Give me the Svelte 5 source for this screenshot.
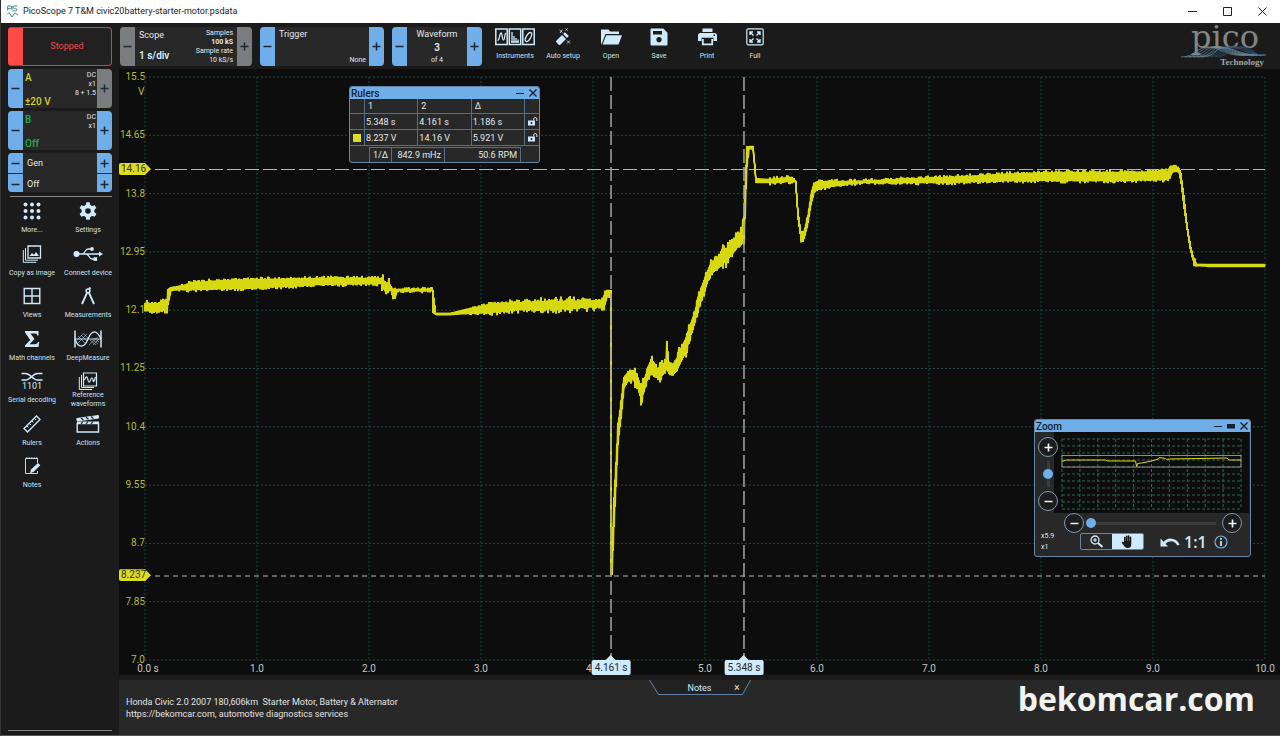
<script lang="ts">
  type Key = [x: number, top: number, bottom: number, noise: number];

  const PLOT_W = 1120;
  const PLOT_H = 583;

  const volts = ["15.5", "14.65", "13.8", "12.95", "12.1", "11.25", "10.4", "9.55", "8.7", "7.85", "7.0"];
  const seconds = ["0.0 s", "1.0", "2.0", "3.0", "4.0", "5.0", "6.0", "7.0", "8.0", "9.0", "10.0"];

  const timeRulers = [4.161, 5.348];
  const voltRulers = [14.16, 8.237];

  const xPct = (s: number) => (s / 10) * 100;
  const yPct = (v: number) => ((15.5 - v) / 8.5) * 100;

  /* Min/max envelope of channel A, in plot units. */
  const envelope: Key[] = [
    [0, 226, 234, 2], [22, 226, 234, 2], [23, 212, 228, 0], [26, 210, 214, 0], [34, 209, 213, 1],
    [50, 205, 213, 1], [80, 203, 212, 1], [120, 202, 211, 1], [170, 201, 208, 1], [236, 201, 207, 0],
    [237, 202, 211, 3], [246, 209, 214, 1], [248, 212, 222, 1], [250, 212, 222, 1], [252, 212, 214, 1],
    [287, 212, 214, 1], [288, 213, 236, 0], [291, 236, 238, 0], [305, 236, 238, 0], [325, 231, 237, 1],
    [345, 227, 236, 2], [375, 225, 233, 2], [415, 224, 232, 2], [458, 223, 230, 2], [460, 214, 228, 1],
    [462, 213, 219, 1], [465, 213, 221, 0], [466, 213, 498, 0], [467, 480, 498, 0], [469, 420, 450, 0],
    [471, 385, 410, 0], [473, 348, 366, 1], [476, 325, 342, 1], [479, 300, 311, 1], [484, 294, 303, 2],
    [488, 293, 303, 3], [492, 297, 309, 2], [495, 307, 319, 2], [496, 311, 327, 2], [499, 303, 313, 3],
    [503, 292, 301, 2], [507, 279, 296, 2], [509, 289, 300, 2], [513, 291, 301, 3], [518, 288, 297, 2],
    [521, 283, 293, 2], [522, 264, 291, 1], [524, 285, 297, 2], [528, 287, 298, 2], [532, 281, 293, 3],
    [536, 271, 285, 3], [540, 263, 277, 3], [545, 249, 261, 2], [550, 234, 244, 2], [555, 215, 227, 2],
    [560, 200, 213, 2], [565, 188, 198, 2], [575, 177, 190, 3], [585, 168, 180, 3], [592, 159, 171, 3],
    [597, 154, 167, 3], [599, 140, 166, 2], [600, 108, 142, 0], [601, 88, 112, 0], [602, 69, 90, 0],
    [604, 69, 72, 0], [608, 69, 73, 0], [610, 88, 96, 0], [611, 101, 106, 0], [625, 102, 106, 1],
    [644, 100, 105, 1], [650, 103, 105, 0], [651, 104, 115, 0], [653, 132, 143, 0], [656, 155, 164, 1],
    [659, 155, 162, 1], [663, 138, 146, 0], [666, 118, 128, 1], [669, 106, 116, 1], [673, 104, 112, 1],
    [685, 104, 110, 1], [715, 104, 106, 1], [755, 102, 106, 1], [805, 100, 106, 1], [855, 97, 104, 1],
    [905, 95, 104, 1], [965, 95, 104, 1], [1023, 94, 103, 1], [1025, 90, 100, 1], [1029, 88, 93, 1],
    [1034, 91, 96, 1], [1036, 96, 107, 0], [1039, 118, 132, 0], [1042, 145, 153, 0], [1045, 166, 172, 1],
    [1049, 182, 187, 1], [1052, 187, 189, 0], [1065, 187, 190, 0], [1120, 187, 190, 0],
  ];

  function tracePath(keys: Key[]) {
    let seed = 11;
    const rand = () => {
      seed = (seed * 16807) % 2147483647;
      return seed / 2147483647;
    };
    const spike = (n: number) => rand() ** 3 * n * 2.4;
    const points: string[] = [];
    for (let i = 1; i < keys.length; i++) {
      const [x0, t0, b0, n0] = keys[i - 1];
      const [x1, t1, b1] = keys[i];
      for (let x = x0; x < x1; x++) {
        const k = (x - x0) / (x1 - x0);
        const top = t0 + (t1 - t0) * k - spike(n0);
        const bottom = b0 + (b1 - b0) * k + spike(n0);
        points.push(`${x},${top.toFixed(1)} ${x},${bottom.toFixed(1)}`);
      }
    }
    const [x, t] = keys[keys.length - 1];
    points.push(`${x},${t}`);
    return points.join(" ");
  }

  const trace = tracePath(envelope);

  const toolbar = [
    ["instruments", "Instruments"],
    ["wand", "Auto setup"],
    ["folder", "Open"],
    ["save", "Save"],
    ["print", "Print"],
    ["full", "Full"],
  ];

  const tools = [
    ["more", "More..."],
    ["gear", "Settings"],
    ["image", "Copy as image"],
    ["usb", "Connect device"],
    ["views", "Views"],
    ["compass", "Measurements"],
    ["sigma", "Math channels"],
    ["deep", "DeepMeasure"],
    ["serial", "Serial decoding"],
    ["reference", "Reference waveforms"],
    ["ruler", "Rulers"],
    ["actions", "Actions"],
    ["notes", "Notes"],
  ];

  let zoomX = $state(0);
  let zoomY = $state(50);
  let notes = $state(
    "Honda Civic 2.0 2007 180,606km  Starter Motor, Battery & Alternator\nhttps://bekomcar.com, automotive diagnostics services",
  );
</script>

{#snippet minus(label: string, grey = false)}
  <button class="step" class:step--grey={grey} aria-label={`${label} down`}>
    <svg width="9" height="9" viewBox="0 0 9 9"><path d="M0.500 4.500h8" /></svg>
  </button>
{/snippet}

{#snippet plus(label: string, grey = false)}
  <button class="step" class:step--grey={grey} aria-label={`${label} up`}>
    <svg width="9" height="9" viewBox="0 0 9 9"><path d="M0.500 4.500h8M4.500 0.500v8" /></svg>
  </button>
{/snippet}

{#snippet lock()}
  <svg class="lock" width="10" height="9" viewBox="0 0 10 9">
    <path d="M0 3.500h7v5H0z" fill="#cfeafc" />
    <path d="M5.700 3.500V2.200a1.600 1.600 0 0 1 3.200 0V4" fill="none" stroke="#cfeafc" />
    <path d="M3.500 5v2" stroke="#1c1c1c" stroke-width="1.400" />
  </svg>
{/snippet}

{#snippet icon(name: string)}
  {#if name === "instruments"}
    <svg width="40" height="18" viewBox="0 0 40 18" class="line">
      <path d="M.8 1h11.400v15.500H.8zM14.300 1h11.400v15.500H14.300zM27.800 1h11.400v15.500H27.800z" stroke-width="1.500" />
      <path d="M2.500 12c2 1 2-7 3.500-7s1 7 2.500 7 1-6 2.200-7" stroke-width="1.300" />
      <path d="M17 4v10M19 8v6M21 10v4M23 11.500V14M16 14h8" stroke-width="1.300" />
      <ellipse cx="33.500" cy="9" rx="2.200" ry="5" transform="rotate(30 33.500 9)" stroke-width="1.300" />
    </svg>
  {:else if name === "wand"}
    <svg width="18" height="18" viewBox="0 0 18 18" class="solid">
      <path d="m2.500 12.500 5.500-5.500 4 4-5.500 5.500a1.400 1.400 0 0 1-2 0l-2-2a1.400 1.400 0 0 1 0-2z" />
      <path d="M9 6 11 4.200 14.800 8 13 10z" />
      <path d="m5.500 2 3 2.500M8.500 1.500 6 5M13.500.5l-2 2M11.500.5l2 2M13 12.500l3 3M16 12.500 13 15.500" fill="none" stroke="#cfeafc" stroke-width=".8" />
    </svg>
  {:else if name === "folder"}
    <svg width="21" height="18" viewBox="0 0 21 18" class="solid">
      <path d="M0 16.500V1.500h7.500l1.500 2h9V6H4.500L1.200 14.500z" />
      <path d="M5.200 7.200H21l-3.500 9.300H1.500z" />
    </svg>
  {:else if name === "save"}
    <svg width="18" height="18" viewBox="0 0 18 18" class="solid">
      <path fill-rule="evenodd" d="M1.500.5h11.800l4.200 4.200v12a.8.8 0 0 1-.8.8H1.500a1 1 0 0 1-1-1v-15a1 1 0 0 1 1-1zM3 3v3.500h9V3zM9 9a2.700 2.700 0 1 0 .01 0z" />
    </svg>
  {:else if name === "print"}
    <svg width="19" height="18" viewBox="0 0 19 18" class="solid">
      <path d="M4.500.5h10V4h-10z" />
      <path fill-rule="evenodd" d="M2.500 5h14a2.500 2.500 0 0 1 2.500 2.500V13h-3.500V9.800h-12V13H0V7.500A2.500 2.500 0 0 1 2.500 5zM15.500 6.500v1.500h1.500V6.500z" />
      <path d="M4.800 11v5.300h9.400V11" fill="none" stroke="#cfeafc" stroke-width="1.800" />
    </svg>
  {:else if name === "full"}
    <svg width="18" height="18" viewBox="0 0 18 18" class="line">
      <rect x=".8" y=".8" width="16.400" height="16" rx="1.500" stroke-width="1.200" />
      <path d="M4 7V4h3M4 4l3.500 3.500M14 7V4h-3M14 4l-3.500 3.500M4 11v3h3M4 14l3.500-3.500M14 11v3h-3M14 14l-3.500-3.500" stroke-width="1.400" />
    </svg>
  {:else if name === "more"}
    <svg width="18" height="18" viewBox="0 0 18 18" class="solid">
      {#each [2.5, 9, 15.5] as cy}
        {#each [2.5, 9, 15.5] as cx}
          <circle {cx} {cy} r="2" />
        {/each}
      {/each}
    </svg>
  {:else if name === "gear"}
    <svg width="18" height="18" viewBox="0 0 18 18">
      <circle cx="9" cy="9" r="4.600" fill="none" stroke="#cfeafc" stroke-width="3.600" />
      {#each [0, 60, 120, 180, 240, 300] as a}
        <path d="M6.700 3.500 7.300.3h3.400l.6 3.200z" fill="#cfeafc" transform={`rotate(${a} 9 9)`} />
      {/each}
    </svg>
  {:else if name === "image"}
    <svg width="20" height="18" viewBox="0 0 20 18" class="line">
      <path d="M6 1h12.500v12H6z" stroke-width="1.300" />
      <path d="M3.500 3v12.200H16M1.300 5v12.300h13" />
      <path d="m7.500 11 2.500-3 2 1.800L14 7l3 4z" fill="#cfeafc" stroke="none" />
    </svg>
  {:else if name === "usb"}
    <svg width="30" height="18" viewBox="0 0 30 18" class="line">
      <circle cx="3.500" cy="9" r="3" fill="#cfeafc" stroke="none" />
      <path d="M5 9h22M9 9c3 0 3-5 6-5h3M13 9c3 0 3 5 6 5h2" stroke-width="1.300" />
      <path d="m26 6.500 4 2.500-4 2.500z" fill="#cfeafc" stroke="none" />
      <circle cx="19" cy="4" r="1.900" fill="#cfeafc" stroke="none" />
      <path d="M20.500 12.300h3.600v3.600h-3.600z" fill="#cfeafc" stroke="none" />
    </svg>
  {:else if name === "views"}
    <svg width="18" height="18" viewBox="0 0 18 18" class="line">
      <path d="M1.200 1.500h15.600v15H1.200zM9 1.500v15M1.200 9h15.600" stroke-width="1.400" />
    </svg>
  {:else if name === "compass"}
    <svg width="16" height="18" viewBox="0 0 16 18" class="line">
      <circle cx="8" cy="3.800" r="1.900" stroke-width="1.500" />
      <path d="M7 5.800 2 17M9 5.800 14 17M9 2l1.500-1.500" stroke-width="1.900" />
    </svg>
  {:else if name === "sigma"}
    <svg width="16" height="18" viewBox="0 0 16 18" class="solid">
      <path d="M1 1h13.500v4.500h-1.200C13 4 12.300 3.500 11 3.500H6.500L10.500 9l-5 5.200H11c1.800 0 2.500-.8 3-2.200h1.200L14.500 17H1v-1.500L6.200 10 1 2.500z" />
    </svg>
  {:else if name === "deep"}
    <svg width="28" height="18" viewBox="0 0 28 18" class="line">
      <path d="M1 .5v17M27 .5v17" stroke-width="1.500" />
      <path d="M1 9c3 9 9 10 13 0s9-9 13 0" stroke-width="1.300" />
      <path d="M1 9h26" stroke-width=".9" />
      <path d="m4 6 8 8M7 5l6 6M10 4l4 4M13 4l-9 9M10 3 3 10M16 10l6 5M18 9l6 5M20 8l5 4M24 7l-9 8M25 9l-6 6" stroke-width=".5" />
    </svg>
  {:else if name === "serial"}
    <svg width="22" height="18" viewBox="0 0 22 18" class="line">
      <path d="M.5 1.500h4c5 0 7 6.500 12 6.500h5M.5 8h4c5 0 7-6.500 12-6.500h5" stroke-width="1.600" />
      <text x="11" y="17" text-anchor="middle">1101</text>
    </svg>
  {:else if name === "reference"}
    <svg width="20" height="18" viewBox="0 0 20 18" class="line">
      <path d="M5.500 1h13v13h-13z" stroke-width="1.200" />
      <path d="M3.500 3v12.500H16M1.300 5v12.500h13" />
      <path d="M6.500 8c2-5 3-3 3.500 0s1.500 3 2.500 0 2-3 2.500 0 1 2 2.500-3" stroke-width="1.200" />
    </svg>
  {:else if name === "ruler"}
    <svg width="18" height="18" viewBox="0 0 18 18" class="line">
      <path d="M1 13.500 13.500 1 17 4.500 4.500 17z" stroke-width="1.300" />
      <path d="m4 11 1.500 1.500M6.500 8.500 8 10M9 6l1.500 1.500M11.500 3.500 13 5" />
    </svg>
  {:else if name === "actions"}
    <svg width="24" height="18" viewBox="0 0 24 18" class="line">
      <path d="M1.200 8.500h21.300v8.500H1.200z" stroke-width="1.400" />
      <path d="m.8 3.500 21.500-3 .4 2.500-21.500 3z" fill="#cfeafc" />
      <path d="M1 6.500h22v2.500H1z" fill="#cfeafc" stroke="none" />
      <path d="m5 3 2.500 2M10 2.200l2.500 2M15 1.500l2.500 2M7 6.500 5 9M12 6.500 10 9M17 6.500 15 9" stroke="#1b1b1b" stroke-width="1.200" />
    </svg>
  {:else if name === "notes"}
    <svg width="17" height="18" viewBox="0 0 17 18" class="line">
      <path d="M13.500 6V1.500H1.500v15h12V14" stroke-width=".9" />
      <path d="M2 1.300h12" stroke-dasharray="1.500 1" stroke-width="1.500" />
      <path d="m7 12.500 7-6.500 2.300 2.300-6.800 6.700-3.500 1.300z" fill="#cfeafc" stroke="none" />
    </svg>
  {/if}
{/snippet}

<div class="app">
  <header class="titlebar">
    <svg width="11" height="13" viewBox="0 0 11 13" class="titlebar__icon">
      <path d="M.7 5.500V1h2.500a1.300 1.300 0 0 1 0 2.700H.7M10 1H7.300a1.200 1.200 0 0 0 0 2.400h1.200a1.200 1.200 0 0 1 0 2.400H5.500M5 1v4" />
      <path d="m0 9.500 2-2 3 4.500 3-4 3 2" />
    </svg>
    <h1>PicoScope 7 T&amp;M civic20battery-starter-motor.psdata</h1>
    <div class="titlebar__buttons">
      <button aria-label="Minimize"><svg width="9" height="9" viewBox="0 0 9 9"><path d="M0 4.500h9" /></svg></button>
      <button aria-label="Maximize"><svg width="9" height="9" viewBox="0 0 9 9"><path d="M.5.5h8v8h-8z" /></svg></button>
      <button aria-label="Close"><svg width="9" height="9" viewBox="0 0 9 9"><path d="m.5.5 8 8m0-8-8 8" /></svg></button>
    </div>
  </header>

  <div class="body">
    <aside class="sidebar">
      <button class="stopped">Stopped</button>

      <section class="box channel channel--a">
        {@render minus("Channel A range")}
        <div class="channel__main"><span>A</span><strong>±20 V</strong></div>
        <div class="channel__info"><span>DC</span><span>x1</span><span>8 + 1.5</span></div>
        {@render plus("Channel A range", true)}
      </section>
      <section class="box channel channel--b">
        {@render minus("Channel B range")}
        <div class="channel__main"><span>B</span><strong>Off</strong></div>
        <div class="channel__info"><span>DC</span><span>x1</span></div>
        {@render plus("Channel B range")}
      </section>
      <section class="box gen">
        {@render minus("Generator")}<span>Gen</span>{@render plus("Generator")}
        {@render minus("Generator output")}<span>Off</span>{@render plus("Generator output")}
      </section>

      <nav class="tools">
        {#each tools as [name, label]}
          <button class="tool" class:tool--tall={name === "reference"}>{@render icon(name)}<span>{label}</span></button>
        {/each}
      </nav>
      <hr />
    </aside>

    <main>
      <div class="toolbar">
        <section class="box scope">
          {@render minus("Timebase", true)}
          <div class="scope__main"><span>Scope</span><strong>1 s/div</strong></div>
          <div class="scope__info">
            <span>Samples</span><b>100 kS</b><span>Sample rate</span><span>10 kS/s</span>
          </div>
          {@render plus("Timebase", true)}
        </section>
        <section class="box trigger">
          {@render minus("Trigger")}
          <div class="trigger__main"><span>Trigger</span><small>None</small></div>
          {@render plus("Trigger")}
        </section>
        <section class="box waveform">
          {@render minus("Waveform")}
          <div class="waveform__main"><span>Waveform</span><b>3</b><small>of 4</small></div>
          {@render plus("Waveform")}
        </section>
        <nav class="actions">
          {#each toolbar as [name, label]}
            <button class="tool">{@render icon(name)}<span>{label}</span></button>
          {/each}
        </nav>
        <div class="logo">
          <span class="logo__name">pico</span>
          <svg width="88" height="14" viewBox="0 0 88 14">
            {#each [0, 1, 2, 3, 4, 5] as i}
              <path d={`M${i * 4} 12C${14 + i * 4} 12 ${16 + i * 4} 2 ${27 + i * 3} 2S${46 + i * 4} 12 ${64 + i * 4} 10`} />
              <path d={`M${18 + i * 4} 12C${32 + i * 3} 10 ${34 + i * 4} 2 ${48 + i * 3} 2S${62 + i * 2} 10 ${86 - i} 10`} class="dim" />
            {/each}
          </svg>
          <span class="logo__sub">Technology</span>
        </div>
      </div>

      <section class="chart">
        <div class="chart__volts">
          {#each volts as v}<span>{v}</span>{/each}
        </div>
        <span class="chart__unit">V</span>
        <div class="chart__plot">
          <svg viewBox={`0 0 ${PLOT_W} ${PLOT_H}`} preserveAspectRatio="none" role="img" aria-label="Channel A voltage">
            <g class="grid">
              {#each volts as _, i}
                <line x1="0" x2={PLOT_W} y1={(i * PLOT_H) / 10} y2={(i * PLOT_H) / 10} />
              {/each}
              {#each seconds as _, i}
                <line y1="0" y2={PLOT_H} x1={(i * PLOT_W) / 10} x2={(i * PLOT_W) / 10} />
              {/each}
            </g>
            <line class="ruler ruler--long" x1="10" x2={PLOT_W} y1="92.500" y2="92.500" />
            <line class="ruler ruler--short" x1="10" x2={PLOT_W} y1="499" y2="499" />
            <polyline class="trace" points={trace} />
            {#each timeRulers as t}
              <line class="ruler ruler--time" x1={t * 112} x2={t * 112} y1="0" y2={PLOT_H} />
            {/each}
          </svg>
          {#each voltRulers as v}
            <span class="flag flag--volt" style:top={`${yPct(v)}%`}>{v}</span>
          {/each}
          {#each timeRulers as t}
            <span class="flag flag--time" style:left={`${xPct(t)}%`}>{t} s</span>
          {/each}
        </div>
        <div class="chart__seconds">
          {#each seconds as s}<span>{s}</span>{/each}
        </div>

        <section class="window window--rulers">
          <header>
            <h2>Rulers</h2>
            <button aria-label="Minimize rulers"><svg width="8" height="8" viewBox="0 0 8 8"><path d="M0 4.500h8" /></svg></button>
            <button aria-label="Close rulers"><svg width="8" height="8" viewBox="0 0 8 8"><path d="m.5.5 7 7m0-7-7 7" stroke-width="1.400" /></svg></button>
          </header>
          <table>
            <thead>
              <tr><th class="mark"></th><th>1</th><th>2</th><th>Δ</th><th class="mark"></th></tr>
            </thead>
            <tbody>
              <tr><td></td><td>5.348 s</td><td>4.161 s</td><td>1.186 s</td><td>{@render lock()}</td></tr>
              <tr>
                <td><i class="swatch"></i></td><td>8.237 V</td><td>14.16 V</td><td>5.921 V</td><td>{@render lock()}</td>
              </tr>
            </tbody>
          </table>
          <table class="inverse">
            <tbody>
              <tr><th>1/Δ</th><td>842.9 mHz</td><td class="rpm">50.6 RPM</td></tr>
            </tbody>
          </table>
        </section>

        <section class="window window--zoom">
          <header>
            <h2>Zoom</h2>
            <button aria-label="Minimize zoom"><svg width="8" height="8" viewBox="0 0 8 8"><path d="M0 4.500h8" /></svg></button>
            <button aria-label="Dock zoom"><svg width="8" height="8" viewBox="0 0 8 8"><path d="M0 2h8v4.500H0z" fill="#15212c" stroke="none" /></svg></button>
            <button aria-label="Close zoom"><svg width="8" height="8" viewBox="0 0 8 8"><path d="m.5.5 7 7m0-7-7 7" stroke-width="1.400" /></svg></button>
          </header>
          <div class="zoom">
            <div class="zoom__vertical">
              <button class="round" aria-label="Zoom in vertically">
                <svg width="9" height="9" viewBox="0 0 9 9"><path d="M.5 4.500h8M4.500.5v8" /></svg>
              </button>
              <input type="range" aria-label="Vertical zoom" bind:value={zoomY} />
              <button class="round" aria-label="Zoom out vertically">
                <svg width="9" height="9" viewBox="0 0 9 9"><path d="M.5 4.500h8" /></svg>
              </button>
            </div>
            <div class="zoom__map">
              <svg viewBox="0 0 180 70" preserveAspectRatio="none" role="img" aria-label="Overview">
                <g class="grid grid--bright">
                  {#each seconds as _, i}
                    <line x1={i * 18} x2={i * 18} y1="0" y2="70" />
                    <line x1="0" x2="180" y1={i * 7} y2={i * 7} />
                  {/each}
                </g>
                <rect x="0" y="16.500" width="180" height="11.500" />
                <polyline points="0,22.500 4,21 44,21 46,22 74,22 75,27.500 76,24.500 80,24 90,22 97,20 98,18.500 104,19.500 105,20.500 108,20 166,19 168,21 180,21" />
              </svg>
            </div>
            <div class="zoom__factors"><span>x5.9</span><span>x1</span></div>
            <div class="zoom__controls">
              <div class="zoom__horizontal">
                <button class="round" aria-label="Zoom out">
                  <svg width="9" height="9" viewBox="0 0 9 9"><path d="M.5 4.500h8" /></svg>
                </button>
                <input type="range" aria-label="Horizontal zoom" bind:value={zoomX} />
                <button class="round" aria-label="Zoom in">
                  <svg width="9" height="9" viewBox="0 0 9 9"><path d="M.5 4.500h8M4.500.5v8" /></svg>
                </button>
              </div>
              <div class="zoom__modes">
                <div class="toggle">
                  <button aria-label="Marquee zoom">
                    <svg width="14" height="13" viewBox="0 0 14 13" class="line">
                      <circle cx="5" cy="5" r="4" stroke-width="1.300" /><path d="M5 3v4M3 5h4" stroke-width="1.200" />
                      <path d="m8 8 4.500 4" stroke-width="2.200" />
                    </svg>
                  </button>
                  <button class="on" aria-label="Hand tool">
                    <svg width="13" height="13" viewBox="0 0 13 13">
                      <path d="M3 7V2.500a.8.800 0 0 1 1.600 0V6h.3V1.200a.8.800 0 0 1 1.600 0V6h.3V1a.8.800 0 0 1 1.600 0v5h.3V2.200a.8.800 0 0 1 1.600 0V9c0 2.500-1 4-3.500 4C4.500 13 4 12 1 8.200.3 7 1.500 6.300 2.200 7z" fill="#1b1b1b" />
                    </svg>
                  </button>
                </div>
                <button class="plain" aria-label="Undo zoom">
                  <svg width="20" height="12" viewBox="0 0 20 12">
                    <path d="M.5 2.500v8H8z" fill="#cfeafc" />
                    <path d="M4 7.500C8 2.500 15 2.500 18.500 9" fill="none" stroke="#cfeafc" stroke-width="2.600" />
                  </svg>
                </button>
                <button class="plain ratio">1:1</button>
                <button class="plain" aria-label="Zoom help">
                  <svg width="14" height="14" viewBox="0 0 14 14">
                    <circle cx="7" cy="7" r="6" fill="none" stroke="#6faee8" stroke-width="1.200" />
                    <path d="M7 3v1.800M7 6v5" stroke="#cfeafc" stroke-width="1.700" />
                  </svg>
                </button>
              </div>
            </div>
          </div>
        </section>
      </section>

      <section class="notes">
        <div class="notes__tab">
          <svg width="102" height="15" viewBox="0 0 102 15"><path d="M.5 0 9.500 14.500h84L101.500 0" /></svg>
          <label for="notes">Notes</label>
          <button aria-label="Close notes">×</button>
        </div>
        <textarea id="notes" spellcheck="false" bind:value={notes}></textarea>
        <a class="brand" href="https://bekomcar.com">bekomcar.com</a>
      </section>
    </main>
  </div>
</div>

<style>
  :global(body) {
    margin: 0;
    background: #1b1b1b;
  }

  .app {
    box-sizing: border-box;
    min-height: 100vh;
    display: flex;
    flex-direction: column;
    border-left: 1px solid #333;
    border-bottom: 1px solid #555;
    background: #1b1b1b;
    color: #e2e8ec;
    font-family: Roboto, "Open Sans", sans-serif;
    font-size: 9px;
    line-height: 11px;
  }

  button {
    margin: 0;
    padding: 0;
    border: 0;
    background: none;
    color: inherit;
    font: inherit;
    cursor: pointer;
  }

  svg {
    display: block;
    flex: none;
  }

  h1,
  h2 {
    margin: 0;
    font-size: inherit;
  }

  .line {
    fill: none;
    stroke: #cfeafc;
    stroke-width: 1;
  }

  .line text {
    fill: #cfeafc;
    stroke: none;
    font-size: 9px;
  }

  .solid {
    fill: #cfeafc;
  }

  /* title bar */
  .titlebar {
    display: flex;
    align-items: center;
    height: 23px;
    padding-left: 6px;
    background: #fff;
    color: #222;
  }

  .titlebar h1 {
    flex: 1;
    margin-left: 5px;
    font-weight: 400;
    line-height: 13px;
  }

  .titlebar__icon {
    fill: none;
    stroke: #3a87a0;
  }

  .titlebar__buttons {
    display: flex;
  }

  .titlebar__buttons button {
    display: grid;
    place-items: center;
    width: 35px;
    height: 23px;
  }

  .titlebar__buttons svg {
    fill: none;
    stroke: #222;
  }

  /* shared boxes */
  .body {
    flex: 1;
    display: flex;
  }

  .box {
    display: flex;
    height: 39px;
    border-radius: 4px;
    background: #282828;
    overflow: hidden;
  }

  .step {
    display: grid;
    place-items: center;
    flex: none;
    width: 15px;
    background: #6faee8;
  }

  .step--grey {
    background: #7b7c7f;
  }

  .step svg {
    stroke: #1d2a36;
    stroke-width: 1.5;
  }

  /* sidebar */
  .sidebar {
    flex: none;
    box-sizing: border-box;
    width: 118px;
    padding: 4px 7px 0;
    display: flex;
    flex-direction: column;
    gap: 3px;
  }

  .stopped {
    height: 39px;
    border: 1px solid #d04248;
    border-left-width: 15px;
    border-left-color: #ff4a4a;
    border-radius: 4px;
    background: #212121;
    color: #f04a50;
  }

  .channel__main,
  .scope__main,
  .trigger__main {
    flex: 1;
    display: flex;
    flex-direction: column;
    justify-content: space-between;
    padding: 3px 2px 0;
    white-space: nowrap;
  }

  .channel--a .channel__main {
    color: #cfcf26;
  }

  .channel--b .channel__main {
    color: #1fae4b;
  }

  .channel__main span,
  .channel__main strong {
    font-size: 10px;
    font-weight: 500;
    line-height: 12px;
  }

  .channel__info {
    display: flex;
    flex-direction: column;
    padding: 2px 1px 0 0;
    font-size: 7px;
    line-height: 9px;
    text-align: right;
    white-space: nowrap;
  }

  .gen {
    display: grid;
    grid-template-columns: 15px 1fr 15px;
    grid-template-rows: 1fr 1fr;
    row-gap: 1px;
    align-items: stretch;
    line-height: 20px;
  }

  .gen span {
    padding-left: 4px;
  }

  .tools {
    box-sizing: border-box;
    display: grid;
    grid-template-columns: 1fr 1fr;
    grid-auto-rows: 1fr;
    height: 304px;
    margin: 1px -4px 0;
    padding-top: 6px;
    position: relative;
  }

  .tools::before {
    content: "";
    position: absolute;
    top: 0;
    left: 6px;
    right: 4px;
    height: 1px;
    background: #858585;
  }

  .tool {
    display: flex;
    flex-direction: column;
    align-items: center;
    gap: 6px;
    color: #cfe0ea;
    font-size: 7px;
    line-height: 9px;
    white-space: nowrap;
  }

  .tool--tall {
    gap: 1px;
    white-space: normal;
  }

  .sidebar hr {
    width: 100%;
    height: 1px;
    margin: auto 0 4px;
    border: 0;
    background: #858585;
  }

  /* toolbar */
  main {
    flex: 1;
    min-width: 0;
    display: flex;
    flex-direction: column;
  }

  .toolbar {
    display: flex;
    gap: 8px;
    height: 42px;
    padding: 4px 11px 0 1px;
  }

  .scope {
    width: 132px;
  }

  .scope__main {
    padding: 2px 0 4px 4px;
    line-height: 12px;
  }

  .scope__main strong {
    font-size: 10px;
    font-weight: 600;
    color: #d8ecfa;
  }

  .scope__info {
    padding: 2px 4px 0 0;
    display: flex;
    flex-direction: column;
    font-size: 7px;
    line-height: 9px;
    text-align: right;
    white-space: nowrap;
  }

  .trigger {
    width: 124px;
  }

  .trigger__main {
    padding: 1px 3px 0 4px;
    line-height: 12px;
  }

  .trigger__main small {
    font-size: 7px;
    text-align: right;
  }

  .waveform {
    width: 90px;
  }

  .waveform__main {
    flex: 1;
    display: flex;
    flex-direction: column;
    align-items: center;
    padding-top: 1px;
    line-height: 13px;
  }

  .waveform__main b {
    font-size: 10px;
    font-weight: 600;
  }

  .waveform__main small {
    font-size: 7px;
  }

  .actions {
    display: flex;
    align-items: flex-start;
    padding: 1px 0 0 1px;
  }

  .actions .tool {
    width: 48px;
  }

  .logo {
    position: relative;
    width: 88px;
    height: 42px;
    margin-left: auto;
    margin-top: -4px;
    color: #858585;
    text-align: center;
  }

  .logo__name {
    display: block;
    font: 32px/28px "DejaVu Serif", serif;
  }

  .logo svg {
    position: absolute;
    top: 22px;
    left: 0;
    fill: none;
    stroke: #7390a3;
    stroke-width: 0.7;
  }

  .logo .dim {
    stroke: #2d506b;
  }

  .logo__sub {
    position: absolute;
    right: 5px;
    bottom: -2px;
    color: #a4a4a4;
    font: bold 9px/10px "Liberation Serif", serif;
  }

  /* chart */
  .chart {
    position: relative;
    flex: 1;
    display: grid;
    grid-template-columns: 26px 1fr;
    grid-template-rows: 1fr 15px;
    padding: 8px 15px 0 0;
    background: #0d0d0d;
    font-size: 10px;
  }

  .chart__volts {
    display: flex;
    flex-direction: column;
    justify-content: space-between;
    align-items: flex-end;
    color: #b9bb28;
  }

  .chart__volts span {
    height: 0;
    line-height: 0;
  }

  .chart__unit {
    position: absolute;
    top: 17px;
    left: 19px;
    color: #b9bb28;
  }

  .chart__plot {
    position: relative;
  }

  .chart__plot > svg {
    position: absolute;
    inset: 0;
    width: 100%;
    height: 100%;
    overflow: visible;
  }

  .grid line {
    stroke: #20494a;
    stroke-width: 1;
    stroke-dasharray: 2 2;
    vector-effect: non-scaling-stroke;
  }

  .ruler {
    stroke: #b5b5b5;
    stroke-width: 1;
    vector-effect: non-scaling-stroke;
  }

  .ruler--long {
    stroke-dasharray: 14 4;
  }

  .ruler--short {
    stroke-dasharray: 5 4;
  }

  .ruler--time {
    stroke: #a5a5a5;
    stroke-dasharray: 14 4;
    stroke-width: 1.5;
  }

  .trace {
    fill: none;
    stroke: #d8d810;
    stroke-width: 2;
    stroke-linejoin: bevel;
    vector-effect: non-scaling-stroke;
  }

  .flag {
    position: absolute;
    color: #1b2a36;
  }

  .flag--volt {
    left: -26px;
    box-sizing: border-box;
    width: 32px;
    padding-left: 2px;
    transform: translateY(-50%);
    border-radius: 2px;
    background: #dcdc20;
    color: #33350a;
    line-height: 12px;
    clip-path: polygon(0 0, 26px 0, 100% 50%, 26px 100%, 0 100%);
  }

  .flag--time {
    top: 100%;
    z-index: 1;
    padding: 1px 3px;
    transform: translateX(-50%);
    border-radius: 2px;
    background: #cfeafc;
    line-height: 13px;
    white-space: nowrap;
  }

  .flag--time::before {
    content: "";
    position: absolute;
    left: 50%;
    bottom: 100%;
    margin-left: -5px;
    border: 5px solid transparent;
    border-top: 0;
    border-bottom-color: #cfeafc;
  }

  .chart__seconds {
    grid-column: 2;
    display: flex;
    justify-content: space-between;
    color: #c3c7c7;
    line-height: 17px;
  }

  .chart__seconds span {
    display: flex;
    justify-content: center;
    width: 0;
    white-space: nowrap;
  }

  .chart__seconds span:first-child {
    margin-left: 3px;
    margin-right: -3px;
  }

  /* floating windows */
  .window {
    position: absolute;
    z-index: 2;
    box-sizing: border-box;
    border: 1px solid #6287a8;
    border-radius: 3px;
    background: #282828;
    font-size: 9px;
    overflow: hidden;
  }

  .window header {
    display: flex;
    align-items: center;
    gap: 5px;
    height: 12px;
    padding: 0 2px 0 1px;
    background: #6faee8;
    color: #15212c;
  }

  .window h2 {
    flex: 1;
    font-size: 10px;
    font-weight: 500;
  }

  .window header svg {
    fill: none;
    stroke: #15212c;
  }

  .window--rulers {
    top: 17px;
    left: 230px;
    width: 191px;
  }

  .window table {
    border-collapse: collapse;
    table-layout: fixed;
    width: 100%;
  }

  .window th,
  .window td {
    height: 15px;
    padding: 0 1px;
    border: 1px solid #50708c;
    border-width: 0 1px 1px 0;
    font-weight: 400;
    line-height: 14px;
    text-align: left;
    white-space: nowrap;
  }

  .window thead th {
    height: 14px;
    padding-left: 3px;
  }

  .window tr > :last-child {
    border-right: 0;
  }

  .window .mark {
    width: 14px;
    padding: 0;
  }

  .lock {
    margin-left: 2px;
  }

  .swatch {
    display: block;
    width: 8px;
    height: 8px;
    margin-left: 2px;
    background: #dcdc20;
  }

  .window .inverse {
    width: 152px;
    margin: 1px 0 0 19px;
  }

  .window .inverse th,
  .window .inverse td {
    height: 14px;
    padding: 0 3px;
    border: 1px solid #50708c;
    border-bottom: 0;
    text-align: right;
  }

  .window .inverse th {
    width: 15px;
    text-align: center;
  }

  .window .inverse .rpm {
    width: 69px;
  }

  .window--zoom {
    right: 29px;
    bottom: 118px;
    width: 217px;
    height: 138px;
  }

  .zoom {
    display: grid;
    grid-template-columns: 19px 1fr;
    grid-template-rows: 81px 1fr;
    height: 124px;
  }

  .zoom__vertical {
    display: flex;
    flex-direction: column;
    align-items: center;
    justify-content: space-between;
    padding: 5px 0 2px 3px;
    margin-right: -4px;
    z-index: 1;
  }

  .round {
    display: grid;
    place-items: center;
    flex: none;
    box-sizing: border-box;
    width: 20px;
    height: 20px;
    border: 1px solid #7f9ab3;
    border-radius: 50%;
    background: #1d1d1d;
  }

  .round svg {
    stroke: #e8f4fc;
    stroke-width: 1.7;
  }

  input[type="range"] {
    appearance: none;
    flex: 1;
    min-width: 0;
    min-height: 0;
    margin: 0;
    background: linear-gradient(#3b3b3b, #3b3b3b) center / 100% 3px no-repeat;
  }

  input[type="range"]::-webkit-slider-thumb {
    appearance: none;
    width: 10px;
    height: 10px;
    border-radius: 50%;
    background: #6faee8;
  }

  .zoom__vertical input[type="range"] {
    width: 10px;
    writing-mode: vertical-lr;
    direction: rtl;
    background-size: 3px 26px;
  }

  .zoom__map {
    margin-right: 1px;
    padding: 7px 8px 4px 8px;
    background: #0d0d0d;
  }

  .zoom__map svg {
    width: 100%;
    height: 70px;
    overflow: visible;
  }

  .grid--bright line {
    stroke: #2c6752;
    stroke-dasharray: 3 2;
  }

  .zoom__map rect {
    fill: none;
    stroke: #8d8d8d;
  }

  .zoom__map polyline {
    fill: none;
    stroke: #dcdc10;
  }

  .zoom__factors {
    display: flex;
    flex-direction: column;
    gap: 2px;
    padding: 19px 0 0 6px;
    font-size: 7px;
    line-height: 9px;
  }

  .zoom__controls {
    padding: 0 8px 0 10px;
  }

  .zoom__horizontal {
    display: flex;
    align-items: center;
    gap: 2px;
  }

  .zoom__horizontal input {
    height: 12px;
    margin-right: 4px;
  }

  .zoom__modes {
    display: flex;
    align-items: center;
    gap: 4px;
    padding-left: 16px;
  }

  .toggle {
    display: flex;
    margin-right: 12px;
    border: 1px solid #6287a8;
    border-radius: 2px;
    overflow: hidden;
  }

  .toggle button {
    display: grid;
    place-items: center;
    width: 31px;
    height: 15px;
  }

  .toggle .on {
    background: #cfeafc;
  }

  .ratio {
    color: #cfe8f6;
    font-family: "Open Sans", sans-serif;
    font-size: 16px;
    font-weight: 600;
    line-height: 16px;
  }

  .ratio + .plain {
    margin-left: 3px;
  }

  /* notes */
  .notes {
    position: relative;
    height: 55px;
    border-top: 5px solid #1b1b1b;
    background: #282828;
  }

  .notes__tab {
    position: relative;
    width: 102px;
    height: 16px;
    margin: 0 auto;
    display: flex;
    align-items: center;
    justify-content: center;
  }

  .notes__tab svg {
    position: absolute;
    inset: 0;
    fill: #222;
    stroke: #5f84a6;
  }

  .notes__tab label {
    position: relative;
    color: #d6e9f5;
    font-size: 9px;
    line-height: 14px;
  }

  .notes__tab button {
    position: absolute;
    right: 11px;
    top: 2px;
    font-size: 10px;
  }

  textarea {
    display: block;
    box-sizing: border-box;
    width: 100%;
    height: 36px;
    padding: 0 7px;
    border: 0;
    outline: 0;
    resize: none;
    background: none;
    color: #e2e2e2;
    font: 9px/12px Roboto, "Open Sans", sans-serif;
  }

  .brand {
    position: absolute;
    right: 25px;
    bottom: 18px;
    color: #f2f2f2;
    font-family: "Open Sans", sans-serif;
    font-size: 32px;
    font-weight: 700;
    line-height: 36px;
    text-decoration: none;
  }
</style>
